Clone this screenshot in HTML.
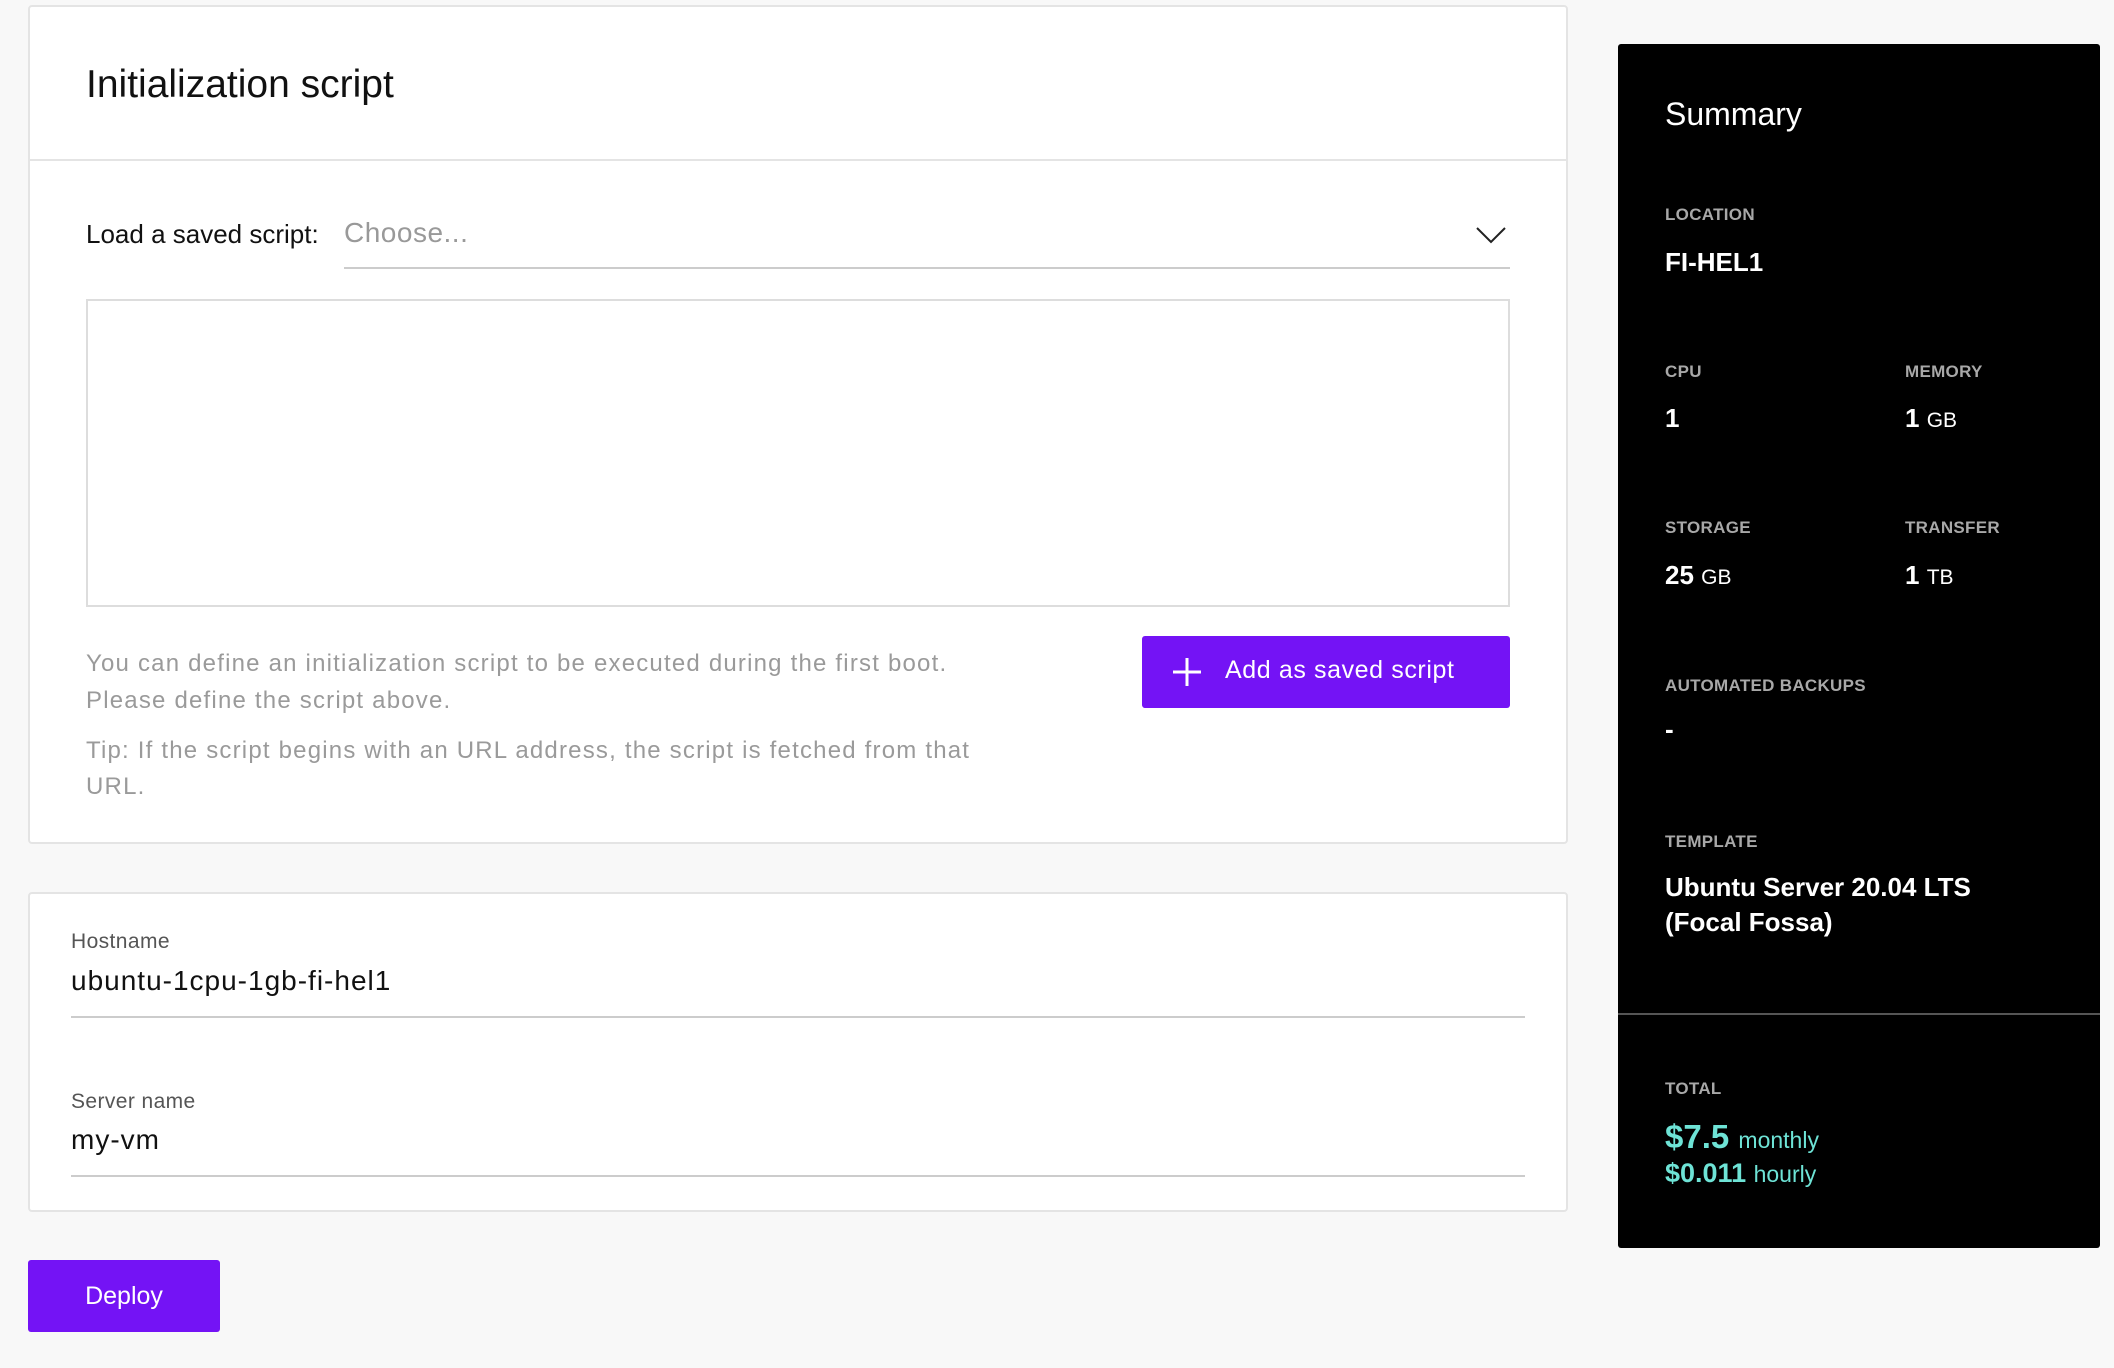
<!DOCTYPE html>
<html><head><meta charset="utf-8"><style>
*{box-sizing:border-box;margin:0;padding:0}
body{width:2114px;height:1368px;background:#f8f8f8;font-family:"Liberation Sans",sans-serif;position:relative;overflow:hidden}
.abs{position:absolute;white-space:nowrap}
.card{position:absolute;background:#fff;border:2px solid #e4e4e4;border-radius:4px}
.gray{color:#9a9a9a;font-size:24px;letter-spacing:1.2px}
.lbl{position:absolute;left:47px;color:#a8a8a8;font-size:17px;font-weight:bold;letter-spacing:.3px}
.val{position:absolute;left:47px;color:#fff;font-size:26px;font-weight:bold}
.val small{font-size:21px;font-weight:normal}
</style></head><body>
<div class="card" style="left:28px;top:5px;width:1540px;height:839px">
  <div class="abs" style="left:56px;top:56px;font-size:39px;color:#111">Initialization script</div>
  <div style="position:absolute;left:0;right:0;top:152px;height:2px;background:#e4e4e4"></div>
  <div class="abs" style="left:56px;top:212px;font-size:26px;color:#111">Load a saved script:</div>
  <div class="abs" style="left:314px;top:210px;font-size:28px;color:#999;letter-spacing:.5px">Choose...</div>
  <svg class="abs" style="left:1445px;top:218px" width="32" height="20"><path d="M2 3 L16 17 L30 3" fill="none" stroke="#222" stroke-width="2"/></svg>
  <div style="position:absolute;left:314px;top:260px;width:1166px;height:2px;background:#ccc"></div>
  <div style="position:absolute;left:56px;top:292px;width:1424px;height:308px;border:2px solid #ddd"></div>
  <div class="abs gray" style="left:56px;top:643px">You can define an initialization script to be executed during the first boot.</div>
  <div class="abs gray" style="left:56px;top:680px">Please define the script above.</div>
  <div class="abs gray" style="left:56px;top:730px">Tip: If the script begins with an URL address, the script is fetched from that</div>
  <div class="abs gray" style="left:56px;top:766px">URL.</div>
  <div style="position:absolute;left:1112px;top:629px;width:368px;height:72px;background:#7413f5;border-radius:3px">
    <svg class="abs" style="left:30px;top:21px" width="30" height="30"><path d="M15 1V29M1 15H29" stroke="#fff" stroke-width="3"/></svg>
    <div class="abs" style="left:83px;top:20px;color:#fff;font-size:25px;letter-spacing:.6px">Add as saved script</div>
  </div>
</div>
<div class="card" style="left:28px;top:892px;width:1540px;height:320px">
  <div class="abs" style="left:41px;top:36px;font-size:21px;color:#555;letter-spacing:.4px">Hostname</div>
  <div class="abs" style="left:41px;top:71px;font-size:28px;color:#111;letter-spacing:1px">ubuntu-1cpu-1gb-fi-hel1</div>
  <div style="position:absolute;left:41px;top:122px;width:1454px;height:2px;background:#ccc"></div>
  <div class="abs" style="left:41px;top:196px;font-size:21px;color:#555;letter-spacing:.4px">Server name</div>
  <div class="abs" style="left:41px;top:230px;font-size:28px;color:#111;letter-spacing:1px">my-vm</div>
  <div style="position:absolute;left:41px;top:281px;width:1454px;height:2px;background:#ccc"></div>
</div>
<div style="position:absolute;left:28px;top:1260px;width:192px;height:72px;background:#7413f5;border-radius:3px;color:#fff;font-size:25px;text-align:center;line-height:72px">Deploy</div>
<div style="position:absolute;left:1618px;top:44px;width:482px;height:1204px;background:#000;border-radius:3px">
  <div class="abs" style="left:47px;top:52px;color:#fff;font-size:32px">Summary</div>
  <div class="lbl" style="top:161px">LOCATION</div>
  <div class="val" style="top:203px">FI-HEL1</div>
  <div class="lbl" style="top:318px">CPU</div>
  <div class="val" style="top:359px">1</div>
  <div class="lbl" style="top:318px;left:287px">MEMORY</div>
  <div class="val" style="top:359px;left:287px">1 <small>GB</small></div>
  <div class="lbl" style="top:474px">STORAGE</div>
  <div class="val" style="top:516px">25 <small>GB</small></div>
  <div class="lbl" style="top:474px;left:287px">TRANSFER</div>
  <div class="val" style="top:516px;left:287px">1 <small>TB</small></div>
  <div class="lbl" style="top:632px">AUTOMATED BACKUPS</div>
  <div class="val" style="top:670px">-</div>
  <div class="lbl" style="top:788px">TEMPLATE</div>
  <div class="val" style="top:826px;line-height:35px">Ubuntu Server 20.04 LTS<br>(Focal Fossa)</div>
  <div style="position:absolute;left:0;right:0;top:969px;height:2px;background:#555"></div>
  <div class="lbl" style="top:1035px">TOTAL</div>
  <div class="abs" style="left:47px;top:1074px;color:#6ee3d6;font-size:33px;font-weight:bold">$7.5 <span style="font-size:23px;font-weight:normal">monthly</span></div>
  <div class="abs" style="left:47px;top:1114px;color:#6ee3d6;font-size:27px;font-weight:bold">$0.011 <span style="font-size:23px;font-weight:normal">hourly</span></div>
</div>
</body></html>
